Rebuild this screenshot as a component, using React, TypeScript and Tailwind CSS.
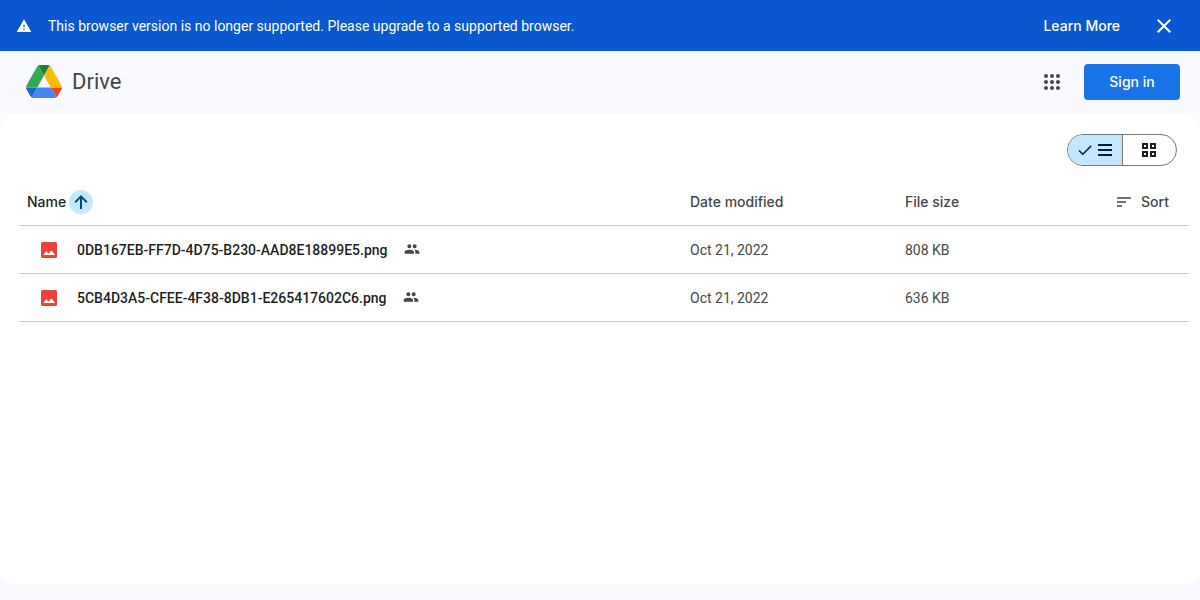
import type { ReactNode } from 'react';

type DriveFile = { name: string; modified: string; size: string };

const files: DriveFile[] = [
  { name: '0DB167EB-FF7D-4D75-B230-AAD8E18899E5.png', modified: 'Oct 21, 2022', size: '808 KB' },
  { name: '5CB4D3A5-CFEE-4F38-8DB1-E265417602C6.png', modified: 'Oct 21, 2022', size: '636 KB' },
];

function Icon({ className, children, box = '0 0 24 24' }: { className: string; children: ReactNode; box?: string }) {
  return (
    <svg className={`shrink-0 fill-current ${className}`} viewBox={box} aria-hidden="true">
      {children}
    </svg>
  );
}

function DriveLogo() {
  return (
    <svg className="h-[33px] w-9 shrink-0" viewBox="0 0 87.3 78" preserveAspectRatio="none" aria-hidden="true">
      <path d="m6.6 66.85 3.85 6.65c.8 1.4 1.95 2.5 3.3 3.3l13.75-23.8h-27.5c0 1.55.4 3.1 1.2 4.5z" fill="#1967d2" />
      <path d="m43.65 25-13.75-23.8c-1.35.8-2.5 1.9-3.3 3.3l-25.4 44a9.06 9.06 0 0 0-1.2 4.5h27.5z" fill="#34a853" />
      <path d="m73.55 76.8c1.35-.8 2.5-1.9 3.3-3.3l9.25-16c.8-1.4 1.2-2.95 1.2-4.5h-27.5z" fill="#ea4335" />
      <path d="m43.65 25 13.75-23.8c-1.35-.8-2.9-1.2-4.5-1.2h-18.5c-1.6 0-3.15.45-4.5 1.2z" fill="#188038" />
      <path d="m59.8 53h-32.3l-13.75 23.8c1.35.8 2.9 1.2 4.5 1.2h50.8c1.6 0 3.15-.45 4.5-1.2z" fill="#4285f4" />
      <path d="m73.4 26.5-12.7-22c-.8-1.4-1.95-2.5-3.3-3.3l-13.75 23.8 16.15 28h27.45c0-1.55-.4-3.1-1.2-4.5z" fill="#fbbc04" />
    </svg>
  );
}

function Banner() {
  return (
    <div role="alert" className="flex h-[51px] items-center bg-[#0b57d0] pr-3 pl-4 text-sm text-white">
      <Icon className="size-4">
        <path d="M1 21h22L12 2 1 21zm12-3h-2v-2h2v2zm0-4h-2v-4h2v4z" />
      </Icon>
      <p className="ml-4 flex-1 font-['Roboto',sans-serif]">
        This browser version is no longer supported. Please upgrade to a supported browser.
      </p>
      <a href="#learn-more" className="font-medium">Learn More</a>
      <button type="button" aria-label="Dismiss" className="ml-5 flex size-12 items-center justify-center">
        <Icon className="size-6">
          <path d="M19 6.41 17.59 5 12 10.59 6.41 5 5 6.41 10.59 12 5 17.59 6.41 19 12 13.41 17.59 19 19 17.59 13.41 12z" />
        </Icon>
      </button>
    </div>
  );
}

function Header() {
  return (
    <header className="flex h-[63px] items-center justify-between pr-5 pb-0.5 pl-[26px]">
      <a href="#drive" className="flex items-center gap-2.5 font-['Roboto',sans-serif] text-[22px] leading-7 text-[#444746]">
        <DriveLogo />
        Drive
      </a>
      <div className="flex items-center gap-3">
        <button type="button" aria-label="Google apps" className="flex size-10 items-center justify-center text-[#444746]">
          <Icon className="size-6">
            <path d="M6 8c1.1 0 2-.9 2-2s-.9-2-2-2-2 .9-2 2 .9 2 2 2zm6 12c1.1 0 2-.9 2-2s-.9-2-2-2-2 .9-2 2 .9 2 2 2zm-6 0c1.1 0 2-.9 2-2s-.9-2-2-2-2 .9-2 2 .9 2 2 2zm0-6c1.1 0 2-.9 2-2s-.9-2-2-2-2 .9-2 2 .9 2 2 2zm6 0c1.1 0 2-.9 2-2s-.9-2-2-2-2 .9-2 2 .9 2 2 2zm4-8c0 1.1.9 2 2 2s2-.9 2-2-.9-2-2-2-2 .9-2 2zm-4 2c1.1 0 2-.9 2-2s-.9-2-2-2-2 .9-2 2 .9 2 2 2zm6 6c1.1 0 2-.9 2-2s-.9-2-2-2-2 .9-2 2 .9 2 2 2zm0 6c1.1 0 2-.9 2-2s-.9-2-2-2-2 .9-2 2 .9 2 2 2z" />
          </Icon>
        </button>
        <a href="#sign-in" className="flex h-9 w-24 items-center justify-center rounded bg-[#1a73e8] text-sm font-medium text-white">
          Sign in
        </a>
      </div>
    </header>
  );
}

function LayoutToggle() {
  return (
    <div role="group" aria-label="Layout" className="flex h-8 w-[110px] overflow-hidden rounded-full border border-[#747775]">
      <button type="button" aria-label="List layout" aria-pressed="true" className="flex flex-1 items-center justify-center gap-0.5 border-r border-[#747775] bg-[#c2e7ff] text-[#001d35]">
        <Icon className="size-[18px]">
          <path d="M9 16.2 4.8 12l-1.4 1.4L9 19 21 7l-1.4-1.4z" />
        </Icon>
        <Icon className="size-[18px]" box="0 0 18 18">
          <path d="M2 3h14v2H2zM2 8h14v2H2zM2 13h14v2H2z" />
        </Icon>
      </button>
      <button type="button" aria-label="Grid layout" aria-pressed="false" className="flex flex-1 items-center justify-center text-[#1f1f1f]">
        <Icon className="size-[18px]" box="0 0 18 18">
          <path fillRule="evenodd" d="M2 2h6v6H2zM4 4v2h2V4zM10 2h6v6h-6zM12 4v2h2V4zM2 10h6v6H2zM4 12v2h2v-2zM10 10h6v6h-6zM12 12v2h2v-2z" />
        </Icon>
      </button>
    </div>
  );
}

function FileTable() {
  return (
    <table className="w-full table-fixed border-separate border-spacing-0 text-left text-sm text-[#444746]">
      <colgroup>
        <col />
        <col className="w-[215px]" />
        <col className="w-[176px]" />
        <col className="w-[107px]" />
      </colgroup>
      <thead>
        <tr className="h-12 *:border-b *:border-[#c4c7c5]">
          <th scope="col" aria-sort="ascending" className="p-0 pl-[7px] font-medium text-[#1f1f1f]">
            <button type="button" className="flex items-center gap-[3px]">
              Name
              <span className="flex size-6 items-center justify-center rounded-full bg-[#c2e7ff] text-[#004a77]">
                <Icon className="size-[18px]" box="0 0 18 18">
                  <path d="M8 16V5.7L3.9 9.9 2.5 8.5 9 2l6.5 6.5-1.4 1.4L10 5.7V16z" />
                </Icon>
              </span>
            </button>
          </th>
          <th scope="col" className="p-0 font-medium">Date modified</th>
          <th scope="col" className="p-0 font-medium">File size</th>
          <th scope="col" className="p-0 font-medium">
            <button type="button" className="mr-[19px] ml-auto flex items-center gap-2">
              <Icon className="size-[18px]" box="0 0 18 18">
                <path d="M2 4.3h14v1.5H2zM2 8.3h9v1.5H2zM2 12.3h5v1.5H2z" />
              </Icon>
              Sort
            </button>
          </th>
        </tr>
      </thead>
      <tbody className="font-['Roboto',sans-serif]">
        {files.map((file) => (
          <tr key={file.name} className="h-12 *:border-b *:border-[#c4c7c5]">
            <td className="p-0 pl-[21px] font-medium text-[#1f1f1f]">
              <div className="flex items-center">
                <Icon className="size-4 text-[#ea4335]" box="0 0 16 16">
                  <path fillRule="evenodd" d="M1.5 0h13A1.5 1.5 0 0 1 16 1.5v13a1.5 1.5 0 0 1-1.5 1.5h-13A1.5 1.5 0 0 1 0 14.5v-13A1.5 1.5 0 0 1 1.5 0zM2.2 13h11.8l-3.5-4.7-2.9 3.4L5.2 9.3z" />
                </Icon>
                <span className="ml-5">{file.name}</span>
                <Icon className="mb-0.5 ml-4 size-4 text-[#444746]">
                  <path d="M16 11c1.66 0 2.99-1.34 2.99-3S17.66 5 16 5s-3 1.34-3 3 1.34 3 3 3zm-8 0c1.66 0 2.99-1.34 2.99-3S9.66 5 8 5 5 6.34 5 8s1.34 3 3 3zm0 2c-2.33 0-7 1.17-7 3.5V19h14v-2.5c0-2.33-4.67-3.5-7-3.5zm8 0c-.29 0-.62.02-.97.05 1.16.84 1.97 1.97 1.97 3.45V19h6v-2.5c0-2.33-4.67-3.5-7-3.5z" />
                </Icon>
              </div>
            </td>
            <td className="p-0">{file.modified}</td>
            <td className="p-0">{file.size}</td>
            <td className="p-0" />
          </tr>
        ))}
      </tbody>
    </table>
  );
}

export default function App() {
  return (
    <div className="flex min-h-screen flex-col bg-[#f8fafd] font-['Inter',sans-serif]">
      <Banner />
      <Header />
      <main className="mb-4 flex-1 rounded-2xl bg-white pt-5 pr-3 pl-5">
        <div className="mb-3 flex justify-end pr-[11px]">
          <LayoutToggle />
        </div>
        <FileTable />
      </main>
    </div>
  );
}
